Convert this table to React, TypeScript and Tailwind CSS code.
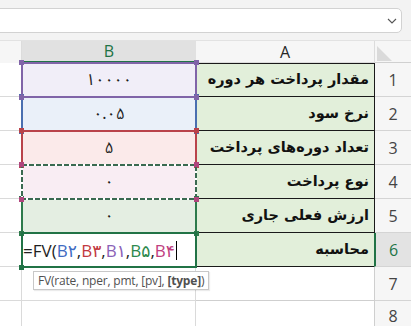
import React from "react";

const fa = { fontFamily: '"Noto Sans Arabic", "Noto Naskh Arabic", "DejaVu Sans", sans-serif' };
const faLabel = { fontFamily: '"DejaVu Sans", "Noto Sans Arabic", sans-serif' };
const ui = { fontFamily: '"Open Sans", "DejaVu Sans", sans-serif' };

type Range = { color: string; bg: string; text: string; z: string; dashed?: boolean };

const bRows: Range[] = [
  { color: "#8064a8", bg: "bg-[#f1eef8]", text: "۱۰۰۰۰", z: "z-20" },
  { color: "#4a6fb0", bg: "bg-[#eaf0f9]", text: "۰.۰۵", z: "z-10" },
  { color: "#b9434b", bg: "bg-[#fbeaea]", text: "۵", z: "z-20" },
  { color: "#b0457d", bg: "bg-[#f9edf3]", text: "۰", z: "z-40", dashed: true },
  { color: "#2d7a4b", bg: "bg-[#e4eee2]", text: "۰", z: "z-30" },
];

const aLabels = [
  "مقدار پرداخت هر دوره",
  "نرخ سود",
  "تعداد دوره‌های پرداخت",
  "نوع پرداخت",
  "ارزش فعلی جاری",
  "محاسبه",
];

function Squares({ color }: { color: string }) {
  const s = { backgroundColor: color };
  return (
    <>
      <div className="absolute left-[-3px] top-[-3px] w-[5px] h-[5px]" style={s} />
      <div className="absolute right-[-3px] top-[-3px] w-[5px] h-[5px]" style={s} />
      <div className="absolute left-[-3px] bottom-[-3px] w-[5px] h-[5px]" style={s} />
      <div className="absolute right-[-3px] bottom-[-3px] w-[5px] h-[5px]" style={s} />
    </>
  );
}

function BOverlay({ r }: { r: Range }) {
  return (
    <div className={`absolute inset-0 pointer-events-none ${r.z}`}>
      {r.dashed ? (
        <svg className="absolute left-[-1px] top-[-1px] overflow-visible" width="176" height="36">
          <rect x="1" y="1" width="174" height="34" fill="none" stroke="#ffffff" strokeWidth="2" />
          <rect x="1" y="1" width="174" height="34" fill="none" stroke="#3a6a50" strokeWidth="2" strokeDasharray="5 2" />
        </svg>
      ) : (
        <div className="absolute left-[-1px] right-[-1px] top-[-1px] bottom-[-1px] border-2" style={{ borderColor: r.color }} />
      )}
      <Squares color={r.color} />
    </div>
  );
}

export default function App() {
  return (
    <div className="w-[411px] h-[326px] overflow-hidden bg-white relative" style={ui}>
      {/* formula bar */}
      <div className="h-[40px] bg-[#f3f3f3] pt-[8px] pr-[9px] flex">
        <div className="-ml-[6px] flex-1 h-[25px] bg-white border border-[#d2d2d2] rounded-[5px] flex items-center justify-end pr-[4px]">
          <svg width="10" height="6" viewBox="0 0 10 6">
            <path d="M1 1 L5 5 L9 1" fill="none" stroke="#555" strokeWidth="1.1" />
          </svg>
        </div>
      </div>
      {/* column headers */}
      <div className="grid grid-cols-[22px_174px_179px_36px] h-[23px] bg-[#f6f6f6] border-t border-[#e2e2e2]">
        <div className="border-r border-[#dcdcdc]" />
        <div className="bg-[#e1e1e1] border-b-2 border-[#217346] flex items-center justify-center text-[16px] text-[#217346] leading-none">
          B
        </div>
        <div className="border-r border-[#dcdcdc] border-b border-[#d0d0d0] flex items-center justify-center text-[16px] text-[#262626] leading-none">
          A
        </div>
        <div className="relative border-b border-[#d0d0d0]">
          <svg className="absolute left-[2px] top-[5px]" width="16" height="15" viewBox="0 0 16 15">
            <path d="M0 0 L0 15 L15 15 Z" fill="#dadada" />
          </svg>
        </div>
      </div>
      {/* rows */}
      {aLabels.map((label, i) => {
        const r = bRows[i];
        const isLast = i === 5;
        return (
          <div key={i} className="grid grid-cols-[22px_174px_179px_36px] h-[34px] relative">
            <div className="border-b border-[#dadada]" />
            {r ? (
              <div className={`relative ${r.bg} flex items-center justify-center text-[16px] text-[#1f1f1f]`} style={fa}>
                {r.text}
                <BOverlay r={r} />
              </div>
            ) : (
              <div className="relative bg-white flex items-center pl-[1px] text-[17px] leading-none whitespace-nowrap" style={ui}>
                <span className="text-[#1f1f1f]">=FV(</span>
                <span className="text-[#3f6bc2]">B۲</span>
                <span className="text-[#1f1f1f]">,</span>
                <span className="text-[#c2393f]">B۳</span>
                <span className="text-[#1f1f1f]">,</span>
                <span className="text-[#8a62b7]">B۱</span>
                <span className="text-[#1f1f1f]">,</span>
                <span className="text-[#2d8a4e]">B۵</span>
                <span className="text-[#1f1f1f]">,</span>
                <span className="text-[#c0407f]">B۴</span>
                <span className="inline-block w-[1px] h-[19px] bg-black ml-[1px]" />
                <div className="absolute left-[-1px] right-[-1px] top-[-1px] bottom-[-1px] border-2 border-[#217346] z-30 pointer-events-none" />
                <div className="absolute left-[-3px] bottom-[-3px] w-[5px] h-[5px] bg-[#217346] z-30" />
              </div>
            )}
            <div
              className={`bg-[#e2efda] border-b border-r border-[#1a1a1a] ${i === 0 ? "border-t" : ""} flex items-center justify-end pr-[5px] text-[14.5px] font-bold text-[#111] whitespace-nowrap overflow-hidden`}
              style={faLabel}
            >
              <span dir="rtl">{label}</span>
            </div>
            <div
              className={`flex items-center justify-center text-[16px] leading-none border-b border-[#d4d4d4] ${
                isLast ? "bg-[#e3e3e3] text-[#217346] border-l-2 border-l-[#217346] -ml-[1px]" : "bg-[#f6f6f6] text-[#444]"
              }`}
            >
              {i + 1}
            </div>
          </div>
        );
      })}
      {[7, 8].map((n) => (
        <div key={n} className="grid grid-cols-[22px_174px_179px_36px] h-[34px]">
          <div className="border-b border-r border-[#dadada]" />
          <div className="border-b border-r border-[#dadada]" />
          <div className="border-b border-r border-[#cfcfcf]" />
          <div className={`bg-[#f6f6f6] border-b border-[#d4d4d4] flex justify-center text-[16px] leading-none text-[#444] ${n === 8 ? "items-start pt-[7px]" : "items-center"}`}>
            {n}
          </div>
        </div>
      ))}
      {/* tooltip */}
      <div
        className="absolute left-[33px] top-[271px] h-[19px] bg-white border border-[#c8c8c8] px-[4px] flex items-center text-[12px] tracking-[-0.2px] text-[#505050] whitespace-nowrap z-50 shadow-[1px_1px_1px_rgba(0,0,0,0.08)]"
        style={ui}
      >
        FV(rate, nper, pmt, [pv],&nbsp;<b className="font-bold">[type]</b>)
      </div>
    </div>
  );
}
